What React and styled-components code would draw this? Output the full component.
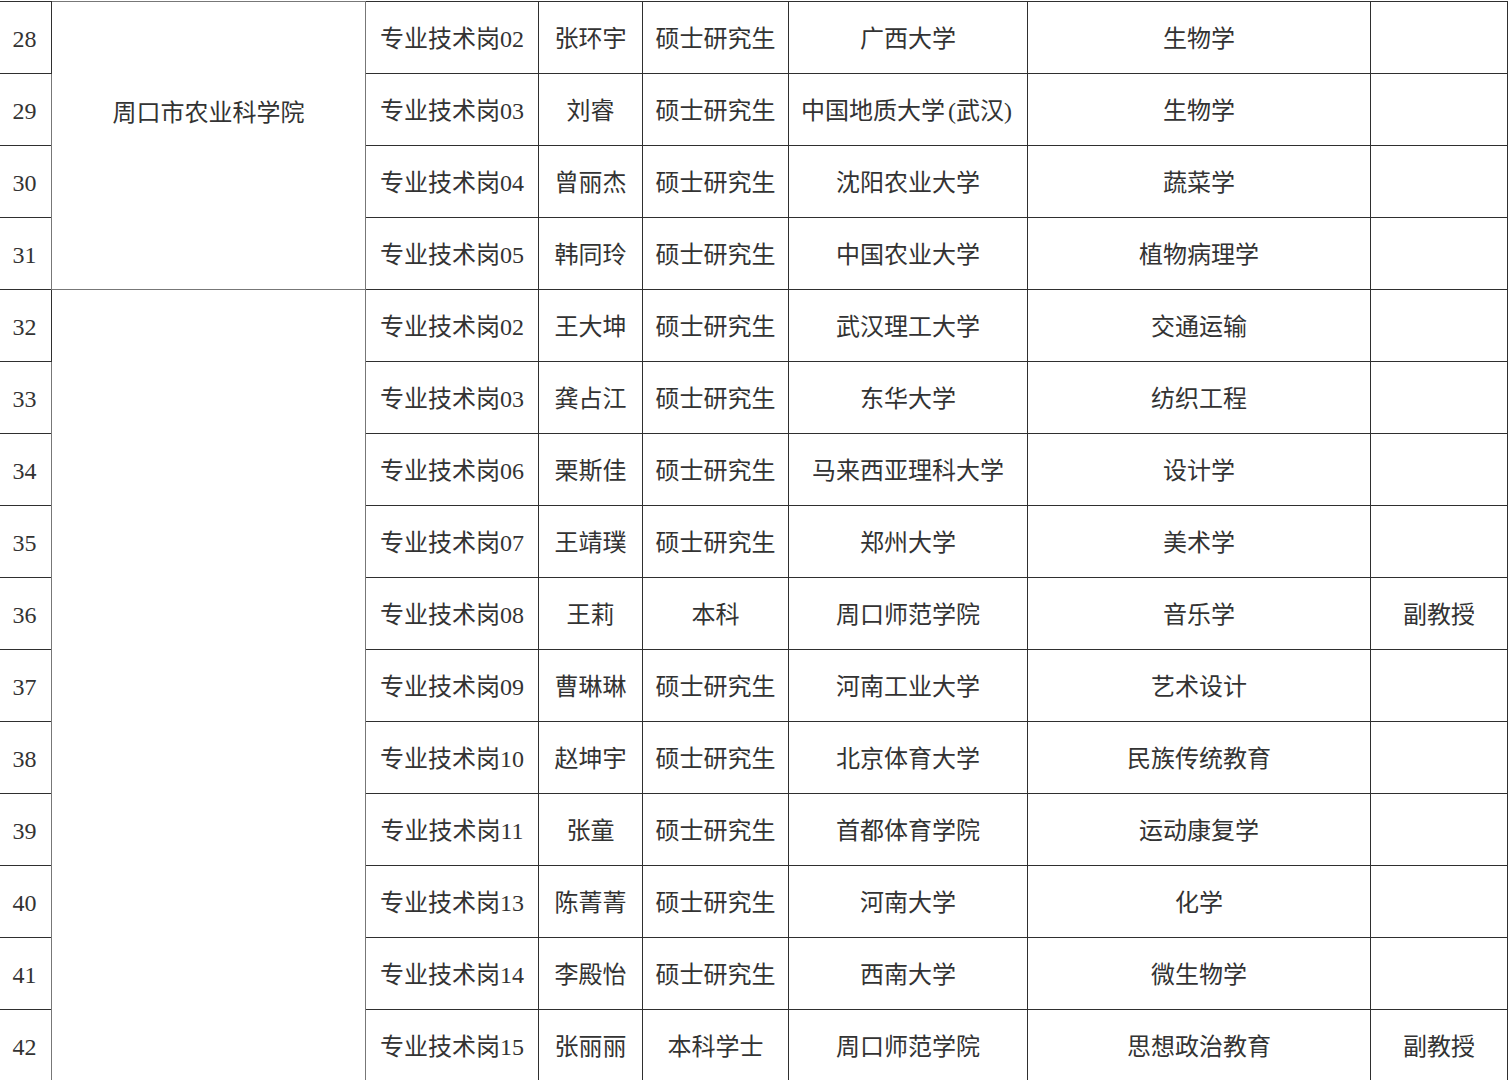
import styled, { createGlobalStyle } from "styled-components"

const GlobalStyle = createGlobalStyle`
  html, body {
    margin: 0;
    padding: 0;
    background: #ffffff;
    overflow: hidden;
  }
  body {
    width: 1512px;
    height: 1080px;
  }
`

const Page = styled.div`
  width: 1512px;
  height: 1080px;
  overflow: hidden;
  padding-top: 1px;
  box-sizing: border-box;
`

const Table = styled.table`
  margin-left: -3px;
  border-collapse: collapse;
  table-layout: fixed;
  width: 1510px;
  font-family: "Liberation Serif", "Noto Sans CJK SC", serif;
  font-size: 24px;
  line-height: 30px;
  color: #333;
`

const Cell = styled.td`
  height: 68px;
  padding: 3px 0 0;
  border: 1.5px solid #2f2f2f;
  text-align: center;
  vertical-align: middle;
  white-space: nowrap;
`

const UnitCell = styled(Cell)`
  border-color: #777;
  padding-bottom: ${(p) => p.$lift || 0}px;
`

const Paren = styled.span`
  margin: 0 3px;
`

const columns = [54, 314, 173, 104, 146, 239, 343, 137]

const rows = [
  ["28", "专业技术岗02", "张环宇", "硕士研究生", "广西大学", "生物学", ""],
  ["29", "专业技术岗03", "刘睿", "硕士研究生", <>中国地质大学<Paren>(武汉)</Paren></>, "生物学", ""],
  ["30", "专业技术岗04", "曾丽杰", "硕士研究生", "沈阳农业大学", "蔬菜学", ""],
  ["31", "专业技术岗05", "韩同玲", "硕士研究生", "中国农业大学", "植物病理学", ""],
  ["32", "专业技术岗02", "王大坤", "硕士研究生", "武汉理工大学", "交通运输", ""],
  ["33", "专业技术岗03", "龚占江", "硕士研究生", "东华大学", "纺织工程", ""],
  ["34", "专业技术岗06", "栗斯佳", "硕士研究生", "马来西亚理科大学", "设计学", ""],
  ["35", "专业技术岗07", "王靖璞", "硕士研究生", "郑州大学", "美术学", ""],
  ["36", "专业技术岗08", "王莉", "本科", "周口师范学院", "音乐学", "副教授"],
  ["37", "专业技术岗09", "曹琳琳", "硕士研究生", "河南工业大学", "艺术设计", ""],
  ["38", "专业技术岗10", "赵坤宇", "硕士研究生", "北京体育大学", "民族传统教育", ""],
  ["39", "专业技术岗11", "张童", "硕士研究生", "首都体育学院", "运动康复学", ""],
  ["40", "专业技术岗13", "陈菁菁", "硕士研究生", "河南大学", "化学", ""],
  ["41", "专业技术岗14", "李殿怡", "硕士研究生", "西南大学", "微生物学", ""],
  ["42", "专业技术岗15", "张丽丽", "本科学士", "周口师范学院", "思想政治教育", "副教授"],
]

const units = {
  0: { name: "周口市农业科学院", span: 4, lift: 68 },
  4: { name: "", span: 11, lift: 0 },
}

export default function App() {
  return (
    <>
      <GlobalStyle />
      <Page>
        <Table>
          <colgroup>
            {columns.map((w, i) => (
              <col key={i} style={{ width: w }} />
            ))}
          </colgroup>
          <tbody>
            {rows.map((r, i) => (
              <tr key={r[0]}>
                <Cell>{r[0]}</Cell>
                {units[i] && (
                  <UnitCell rowSpan={units[i].span} $lift={units[i].lift}>
                    {units[i].name}
                  </UnitCell>
                )}
                {r.slice(1).map((v, j) => (
                  <Cell key={j}>{v}</Cell>
                ))}
              </tr>
            ))}
          </tbody>
        </Table>
      </Page>
    </>
  )
}
